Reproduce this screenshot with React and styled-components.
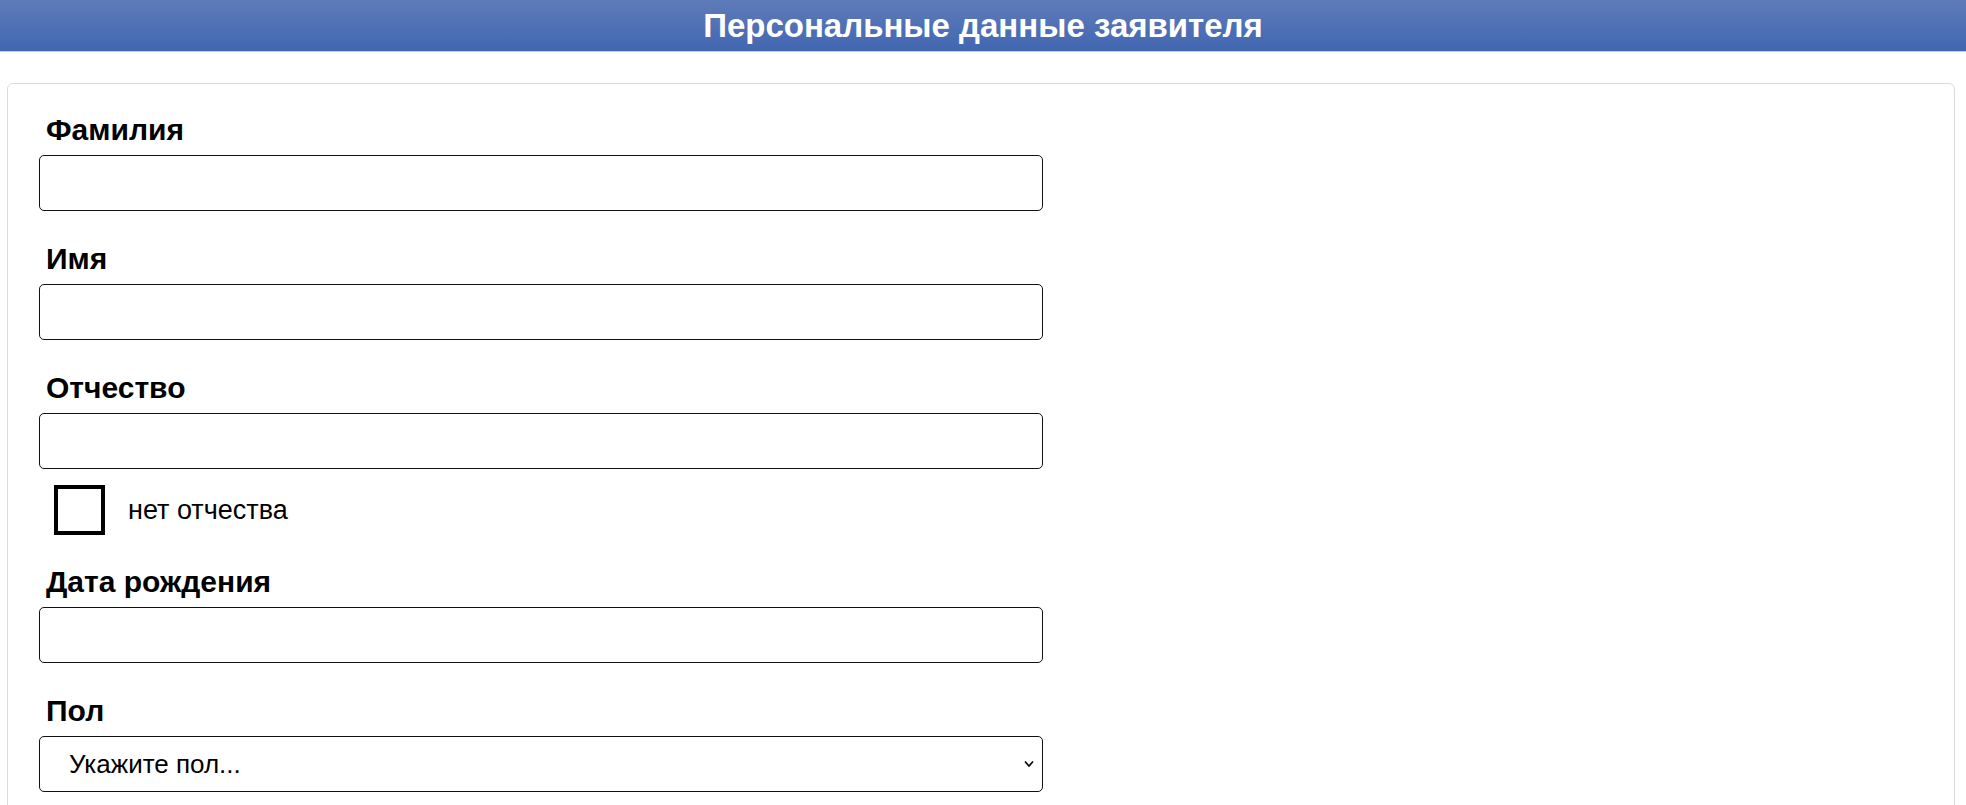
import React from 'react';
import styled, { createGlobalStyle } from 'styled-components';

const GlobalStyle = createGlobalStyle`
  html, body {
    margin: 0;
    padding: 0;
    background: #fff;
    font-family: "Liberation Sans", Arial, sans-serif;
    color: #000;
  }
`;

const Page = styled.div`
  display: flex;
  flex-direction: column;
`;

const Header = styled.div`
  height: 51px;
  display: flex;
  align-items: center;
  justify-content: center;
  background: linear-gradient(to bottom, #5f7cb9 0%, #4166b1 100%);
  border-bottom: 1px solid #cfcfcf;
  h1 {
    margin: 0;
    font-size: 33px;
    line-height: 1;
    font-weight: bold;
    color: #fff;
  }
`;

const Card = styled.div`
  margin: 31px 11px 0 7px;
  padding: 29px 0 40px 31px;
  border: 1px solid #dcdcdc;
  border-radius: 6px;
  min-height: 800px;
`;

const Field = styled.div`
  width: 1004px;
  display: flex;
  flex-direction: column;
  margin-bottom: 31px;
`;

const Label = styled.label`
  display: block;
  padding-left: 7px;
  font-size: 30px;
  line-height: 34px;
  font-weight: bold;
  margin-bottom: 8px;
`;

const TextInput = styled.input`
  box-sizing: border-box;
  width: 100%;
  height: 56px;
  border: 1px solid #111;
  border-radius: 5px;
  padding: 0 20px;
  font-family: inherit;
  font-size: 26px;
  background: #fff;
  outline: none;
`;

const CheckRow = styled.label`
  display: flex;
  align-items: center;
  gap: 23px;
  margin: -15px 0 30px 15px;
  font-size: 27px;
  cursor: pointer;
`;

const Box = styled.input`
  appearance: none;
  box-sizing: border-box;
  margin: 0;
  width: 51px;
  height: 50px;
  border: 4px solid #000;
  background: #fff;
`;

const SelectWrap = styled.div`
  position: relative;
  width: 100%;
`;

const Select = styled.select`
  appearance: none;
  box-sizing: border-box;
  width: 100%;
  height: 56px;
  border: 1px solid #111;
  border-radius: 5px;
  padding: 0 40px 0 29px;
  font-family: inherit;
  font-size: 26px;
  color: #000;
  background: #fff;
  outline: none;
`;

const Chevron = styled.svg`
  position: absolute;
  right: 9px;
  top: 50%;
  margin-top: -4px;
  pointer-events: none;
`;

const fields = [
  { id: 'last', label: 'Фамилия' },
  { id: 'first', label: 'Имя' },
  { id: 'middle', label: 'Отчество', check: 'нет отчества' },
  { id: 'birth', label: 'Дата рождения' },
];

const App = () => (
  <Page>
    <GlobalStyle />
    <Header>
      <h1>Персональные данные заявителя</h1>
    </Header>
    <Card>
      {fields.map((f) => (
        <React.Fragment key={f.id}>
          <Field>
            <Label htmlFor={f.id}>{f.label}</Label>
            <TextInput id={f.id} type="text" />
          </Field>
          {f.check && (
            <CheckRow>
              <Box type="checkbox" />
              {f.check}
            </CheckRow>
          )}
        </React.Fragment>
      ))}
      <Field>
        <Label htmlFor="sex">Пол</Label>
        <SelectWrap>
          <Select id="sex" defaultValue="">
            <option value="" disabled>
              Укажите пол...
            </option>
            <option value="m">Мужской</option>
            <option value="f">Женский</option>
          </Select>
          <Chevron width="10" height="8" viewBox="0 0 10 8">
            <path d="M1 1.5 L5 6 L9 1.5" fill="none" stroke="#000" strokeWidth="1.6" />
          </Chevron>
        </SelectWrap>
      </Field>
    </Card>
  </Page>
);

export default App;
